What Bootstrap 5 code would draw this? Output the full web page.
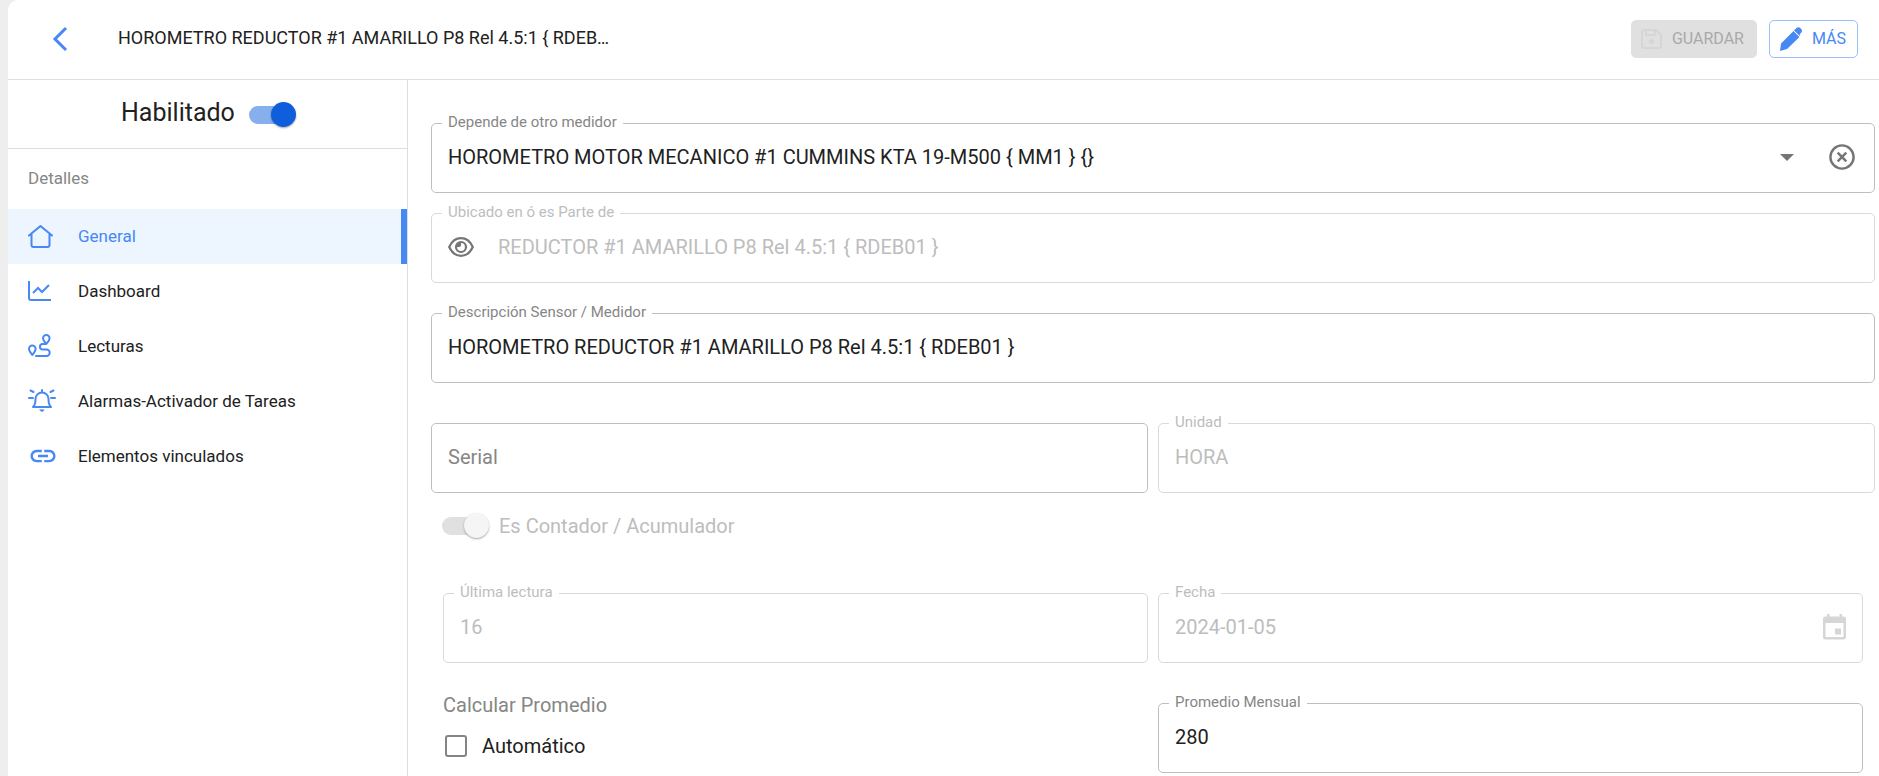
<!DOCTYPE html>
<html lang="es">
<head>
<meta charset="utf-8">
<meta name="viewport" content="width=device-width, initial-scale=1">
<title>Medidor</title>
<link href="https://cdn.jsdelivr.net/npm/bootstrap@5.3.0/dist/css/bootstrap.min.css" rel="stylesheet">
<style>
  :root { --accent: #4788f4; --ink: #212121; --muted: #868686; --faint: #bdbdbd; --rule: #dedede; }
  body { font-family: Roboto, sans-serif; font-size: 20px; line-height: 28px; color: var(--ink); background: #eee; }
  svg { display: block; flex: none; }
  .shell { margin-left: 8px; background: #fff; border-top-left-radius: 10px; }
  .topbar { height: 80px; border-bottom: 1px solid var(--rule); padding: 0 21px 2px 37px; }
  .back-btn { width: 30px; height: 40px; color: var(--accent); }
  .page-title { font-size: 18px; margin: 0 0 0 43px; padding-bottom: 2px; font-weight: 400; line-height: 24px; }
  .actions { gap: 12px; }
  .top-btn { height: 38px; font-size: 16px; line-height: 24px; border-radius: 5px; padding: 0 12px 0 9px; gap: 9px; }
  .btn-save, .btn-save:disabled { background: #e0e0e0; border-color: #e0e0e0; color: #a9a9a9; opacity: 1; }
  .btn-more { color: var(--accent); border: 1px solid #9bbff9; padding-right: 11px; }
  .side { width: 400px; border-right: 1px solid var(--rule); }
  .enable-row { height: 69px; border-bottom: 1px solid var(--rule); font-size: 25px; padding: 0 0 2px 113px; gap: 14px; }
  .side-head { height: 60px; padding: 0 0 2px 20px; font-size: 17px; color: var(--muted); font-weight: 400; margin: 0; }
  .side-link { height: 55px; padding: 0 0 2px 20px; font-size: 17px; color: var(--ink); border-radius: 0; border-right: 6px solid transparent; }
  .side-link:hover { color: var(--accent); }
  .side-link.active { background: #edf5fe; color: var(--accent); border-right-color: var(--accent); }
  .side-icon { width: 50px; color: var(--accent); }
  .content { padding: 43px 4px 3px 23px; }
  .inset { padding: 0 12px; }
  .cols { display: grid; grid-template-columns: 1fr 1fr; gap: 10px; }
  .gap-s { margin-bottom: 20px; }
  .gap-m { margin-bottom: 30px; }
  .gap-l { margin-bottom: 40px; }
  .outlined { position: relative; height: 70px; border: 1px solid #bfbfbf; border-radius: 5px; display: flex; align-items: center; padding: 0 16px 2px; }
  .outlined > label { position: absolute; left: 10px; top: -12px; padding: 0 6px; background: #fff; font-size: 15px; line-height: 20px; color: var(--muted); }
  .outlined > .form-control, .outlined > .form-select { border: 0; padding: 0; font-size: 20px; line-height: 28px; color: var(--ink); background-color: transparent; border-radius: 0; box-shadow: none; }
  .outlined > .form-control::placeholder { color: var(--muted); opacity: 1; }
  .outlined > .form-select { background-image: url("data:image/svg+xml,%3Csvg xmlns='http://www.w3.org/2000/svg' viewBox='0 0 14 7'%3E%3Cpath fill='%23757575' d='M0 0h14L7 7z'/%3E%3C/svg%3E"); background-size: 14px 7px; background-position: right center; }
  .outlined.off { border-color: #d9d9d9; }
  .outlined.off > label, .outlined.off > .form-control:disabled { color: var(--faint); }
  .outlined.off > .form-control:disabled { opacity: 1; -webkit-text-fill-color: var(--faint); }
  .icon-btn { color: #757575; border: 0; }
  .clear-btn { margin: 0 3px 0 35px; }
  .toggle.form-check-input { position: relative; width: 45px; height: 18px; margin: 0; border: 0; border-radius: 9px; background: #87aeed; box-shadow: none; flex: none; }
  .toggle::after { content: ""; position: absolute; right: -2px; top: -4px; width: 25px; height: 25px; border-radius: 50%; background: #0f5fdc; box-shadow: 0 1px 2px rgba(0,0,0,.35); }
  .enable-row .toggle { margin-top: 3px; }
  .toggle.form-check-input:disabled { background: #e0e0e0; opacity: 1; }
  .toggle:disabled::after { background: #f5f5f5; }
  .counter { margin: 18px 0 52px 11px; height: 30px; gap: 12px; color: var(--faint); }
  .box.form-check-input { width: 22px; height: 22px; margin: 0; border: 2px solid #858585; border-radius: 3px; }
  .avg { margin-top: -12px; }
  .avg-head { font-size: 20px; line-height: 28px; margin: 0 0 13px; color: var(--muted); font-weight: 400; }
  .avg-check { gap: 15px; padding-left: 2px; }
</style>
</head>
<body>
<div class="shell min-vh-100 d-flex flex-column">
  <header class="topbar d-flex align-items-center">
    <button class="back-btn btn p-0 border-0 d-flex align-items-center justify-content-center" aria-label="Volver">
      <svg width="16" height="26" viewBox="0 0 16 26" fill="none" stroke="currentColor" stroke-width="3"><path d="M14 2 3 13l11 11"/></svg>
    </button>
    <h1 class="page-title text-nowrap">HOROMETRO REDUCTOR #1 AMARILLO P8 Rel 4.5:1 { RDEB…</h1>
    <div class="actions d-flex ms-auto">
      <button class="top-btn btn-save btn d-flex align-items-center" disabled>
        <svg width="22" height="22" viewBox="0 0 22 22" fill="none" stroke="#d6d6d6" stroke-width="2"><path d="M3 2h12l5 5v11q0 2-2 2H3q-2 0-2-2V4q0-2 2-2zM5 2v5h9V2"/><circle cx="10.500" cy="13.500" r="1.600" fill="#d6d6d6"/></svg>
        GUARDAR
      </button>
      <button class="top-btn btn-more btn d-flex align-items-center">
        <svg width="24" height="24" viewBox="0 0 24 24" fill="currentColor"><path d="M1 24 2 16.500 14.500 4l6 6L8 22zM15.500 3l1.700-1.700c1.700-1.700 3.300-1.200 4.600.1 1.400 1.300 1.800 3.100.1 4.700L20.300 8 21.500 9z M15.700 2.800l5.500 5.500-.7.700-5.600-5.500z"/><path d="m14.500 3.400 6.200 6.200" stroke="#fff" stroke-width="1"/></svg>
        MÁS
      </button>
    </div>
  </header>

  <div class="d-flex flex-grow-1">
    <aside class="side flex-shrink-0">
      <div class="enable-row d-flex align-items-center">
        <label for="habilitado">Habilitado</label>
        <input class="toggle form-check-input" type="checkbox" role="switch" id="habilitado" checked>
      </div>
      <h2 class="side-head d-flex align-items-center">Detalles</h2>
      <nav class="nav flex-column">
        <a class="side-link nav-link active d-flex align-items-center" href="#">
          <span class="side-icon"><svg width="25" height="24" viewBox="0 0 25 24" fill="none" stroke="currentColor" stroke-width="2" stroke-linecap="round" stroke-linejoin="round"><path d="M1 11.500 12.500 2 24 11.500M3.500 9.500V21q0 2 2 2h14q2 0 2-2V9.500"/></svg></span>General</a>
        <a class="side-link nav-link d-flex align-items-center" href="#">
          <span class="side-icon"><svg width="23" height="20" viewBox="0 0 23 20" fill="none" stroke="currentColor" stroke-width="2"><path d="M1 0v17q0 2 2 2h20M5 12l5-5 4 4 7-7"/></svg></span>Dashboard</a>
        <a class="side-link nav-link d-flex align-items-center" href="#">
          <span class="side-icon"><svg width="23" height="23" viewBox="0 0 23 23" fill="none" stroke="currentColor" stroke-width="2" stroke-linecap="round" stroke-linejoin="round"><path d="M4.300 21C2.500 18.700 1 16.800 1 14.700a3.300 3.300 0 0 1 6.600 0C7.600 16.800 6.100 18.700 4.300 21zM18.300 10C16.500 7.700 15 6.200 15 4.300a3.300 3.300 0 0 1 6.600 0C21.600 6.200 20.100 7.700 18.300 10zM8 21.900h10.500a3.200 3.200 0 0 0 0-6.400h-4.300a2.800 2.800 0 0 1 0-5.500h4"/></svg></span>Lecturas</a>
        <a class="side-link nav-link d-flex align-items-center" href="#">
          <span class="side-icon"><svg width="28" height="23" viewBox="0 0 28 23" fill="none" stroke="currentColor" stroke-width="2" stroke-linecap="round" stroke-linejoin="round"><path d="M5 18c2.200-1.800 2.500-4 2.500-8a6.500 6.500 0 0 1 13 0c0 4 .3 6.200 2.500 8zM14 1v2M1 9h4M23 9h4M2.500 1.500l3 1.500M25.500 1.500l-3 1.500"/><path d="M12 20.800h4q-.5 1.700-2 1.700t-2-1.700z" fill="currentColor" stroke-width=".6"/></svg></span>Alarmas-Activador de Tareas</a>
        <a class="side-link nav-link d-flex align-items-center" href="#">
          <span class="side-icon"><svg width="30" height="30" viewBox="0 0 24 24" fill="currentColor"><path d="M3.900 12c0-1.710 1.390-3.100 3.100-3.100h4V7H7c-2.760 0-5 2.240-5 5s2.240 5 5 5h4v-1.900H7c-1.710 0-3.100-1.390-3.100-3.100zM8 13h8v-2H8v2zm9-6h-4v1.900h4c1.710 0 3.100 1.390 3.100 3.100s-1.390 3.100-3.100 3.100h-4V17h4c2.760 0 5-2.240 5-5s-2.240-5-5-5z"/></svg></span>Elementos vinculados</a>
      </nav>
    </aside>

    <main class="content flex-grow-1">
      <form>
        <div class="outlined gap-s">
          <label for="depende">Depende de otro medidor</label>
          <select class="form-select" id="depende"><option>HOROMETRO MOTOR MECANICO #1 CUMMINS KTA 19-M500 { MM1 } {}</option></select>
          <button type="button" class="icon-btn clear-btn btn p-0" aria-label="Quitar">
            <svg width="26" height="26" viewBox="0 0 26 26" fill="none" stroke="currentColor"><circle cx="13" cy="13" r="11.600" stroke-width="2.400"/><path d="m8.700 8.700 8.600 8.600m0-8.600-8.600 8.600" stroke-width="2.500"/></svg>
          </button>
        </div>
        <div class="outlined off gap-m">
          <label for="ubicado">Ubicado en ó es Parte de</label>
          <button type="button" class="icon-btn btn p-0" aria-label="Ver">
            <svg class="me-4" width="26" height="20" viewBox="0 0 26 20" fill="none" stroke="currentColor" stroke-width="2.200"><path d="M1.200 10C3.500 5 8 1.200 13 1.200S22.500 5 24.800 10C22.500 15 18 18.800 13 18.800S3.500 15 1.200 10z"/><circle cx="13" cy="10" r="5"/><path d="M13 5.500a4.500 4.500 0 0 0-4.500 4.500h2.700a1.900 1.900 0 0 0 1.900-1.900z" fill="currentColor" stroke="none"/></svg>
          </button>
          <input class="form-control" id="ubicado" value="REDUCTOR #1 AMARILLO P8 Rel 4.5:1 { RDEB01 }" disabled>
        </div>
        <div class="outlined gap-l">
          <label for="descripcion">Descripción Sensor / Medidor</label>
          <input class="form-control" id="descripcion" value="HOROMETRO REDUCTOR #1 AMARILLO P8 Rel 4.5:1 { RDEB01 }">
        </div>
        <div class="cols">
          <div class="outlined"><input class="form-control" aria-label="Serial" placeholder="Serial"></div>
          <div class="outlined off"><label for="unidad">Unidad</label><input class="form-control" id="unidad" value="HORA" disabled></div>
        </div>
        <div class="counter d-flex align-items-center">
          <input class="toggle form-check-input" type="checkbox" role="switch" id="contador" checked disabled>
          <label for="contador">Es Contador / Acumulador</label>
        </div>
        <div class="inset">
          <div class="cols gap-l">
            <div class="outlined off"><label for="ultima">Última lectura</label><input class="form-control" id="ultima" value="16" disabled></div>
            <div class="outlined off"><label for="fecha">Fecha</label><input class="form-control" id="fecha" value="2024-01-05" disabled>
              <svg width="23" height="26" viewBox="0 0 23 26" fill="#d6d6d6"><path fill-rule="evenodd" d="M4 0h2.500v2.500h10V0H19v2.500h1.500Q23 2.500 23 5v18q0 2.500-2.500 2.500h-18Q0 25.500 0 23V5q0-2.500 2.500-2.500H4zM2.500 9v14h18V9zM12 14.500h6v6h-6z"/></svg>
            </div>
          </div>
          <div class="cols">
            <div class="avg">
              <p class="avg-head">Calcular Promedio</p>
              <div class="avg-check d-flex align-items-center">
                <input class="box form-check-input" type="checkbox" id="auto"><label for="auto">Automático</label>
              </div>
            </div>
            <div class="outlined"><label for="promedio">Promedio Mensual</label><input class="form-control" id="promedio" value="280"></div>
          </div>
        </div>
      </form>
    </main>
  </div>
</div>
<script src="https://cdn.jsdelivr.net/npm/bootstrap@5.3.0/dist/js/bootstrap.bundle.min.js"></script>
</body>
</html>
